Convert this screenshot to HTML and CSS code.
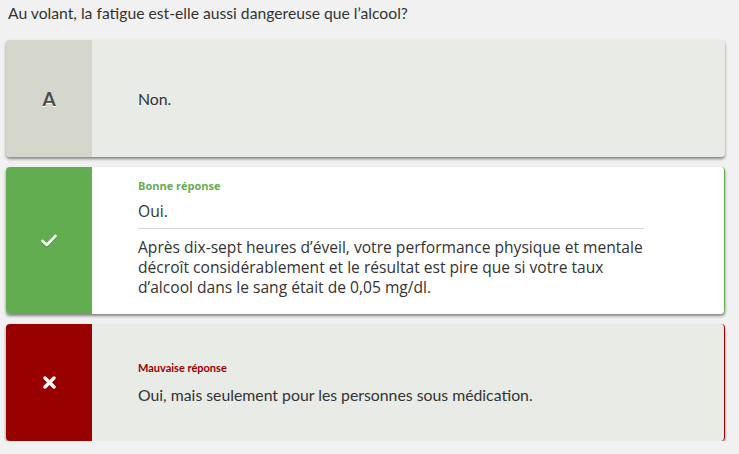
FILE: index.html
```html
<!DOCTYPE html>
<html lang="fr">
  <head>
    <meta charset="UTF-8" />
    <meta name="viewport" content="width=device-width, initial-scale=1.0" />
    <title>Quiz</title>
    <link rel="stylesheet" href="styles.css">
  </head>
  <body>
    <p class="question">Au volant, la fatigue est-elle aussi dangereuse que l’alcool?</p>

    <div class="answers">
      <div class="answer">
        <div class="marker">A</div>
        <div class="content">
          <p class="text">Non.</p>
        </div>
      </div>

      <div class="answer correct">
        <div class="marker">
          <svg width="16" height="13" viewBox="0 0 16 13">
            <path d="M1.5 7 L5.8 11 L14.5 2" fill="none" stroke="#fff" stroke-width="2.6" stroke-linecap="round" stroke-linejoin="round" />
          </svg>
        </div>
        <div class="content">
          <p class="label">Bonne réponse</p>
          <p class="text">Oui.</p>
          <p class="explain">Après dix-sept heures d’éveil, votre performance physique et mentale décroît considérablement et le résultat est pire que si votre taux d’alcool dans le sang était de 0,05 mg/dl.</p>
        </div>
      </div>

      <div class="answer wrong">
        <div class="marker">
          <svg width="13" height="13" viewBox="0 0 13 13">
            <path d="M2 2 L11 11 M11 2 L2 11" fill="none" stroke="#fff" stroke-width="3.4" stroke-linecap="round" />
          </svg>
        </div>
        <div class="content">
          <p class="label">Mauvaise réponse</p>
          <p class="text">Oui, mais seulement pour les personnes sous médication.</p>
        </div>
      </div>
    </div>
  </body>
</html>
```

FILE: styles.css
```css
body {
  font-family: Lato, "Liberation Sans", sans-serif;
  background-color: #f1f1f1;
  color: #333;
  margin: 0;
  padding: 0;
}
.question {
  margin: 0;
  padding: 3px 8px 0;
  font-size: 15.7px;
  line-height: 20px;
}
.answers {
  display: flex;
  flex-direction: column;
  gap: 10px;
  padding: 17px 14px 0 6px;
}
.answer {
  display: flex;
  background: #e9ebe7;
  border-radius: 4px;
  box-shadow: 0 2px 3px rgba(0, 0, 0, 0.45);
  overflow: hidden;
}
.marker {
  flex: 0 0 86px;
  display: flex;
  align-items: center;
  justify-content: center;
  background: #d5d7cd;
  color: #4a4a4a;
  font-size: 19px;
  font-weight: bold;
  text-shadow: 0 1px 0 #fff;
}
.content {
  flex: 1;
  display: flex;
  flex-direction: column;
  justify-content: center;
  padding: 12px 46px;
  min-height: 93px;
}
.content p {
  margin: 0;
  max-width: 506px;
}
.text {
  font-size: 15.8px;
  line-height: 22px;
}
.label {
  font-size: 11px;
  font-weight: bold;
  line-height: 16px;
  margin-bottom: 8px !important;
}
.correct {
  background: #fff;
  border-right: 1px solid #63ad51;
}
.correct .marker {
  background: #63ad51;
}
.correct .label {
  color: #63ad51;
  margin-bottom: 6px !important;
}
.correct .content {
  font-family: "Open Sans", "DejaVu Sans", sans-serif;
  padding: 11px 46px 17px;
}
.correct .text {
  font-size: 15.6px;
  padding-bottom: 6px;
  border-bottom: 1px solid #d6d6d6;
}
.explain {
  font-size: 15.6px;
  line-height: 20px;
  padding-top: 8px;
}
.wrong {
  border-right: 1px solid #990000;
}
.wrong .marker {
  background: #990000;
}
.wrong .label {
  color: #990000;
}
.marker svg {
  filter: drop-shadow(0 1px 0 rgba(0, 0, 0, 0.25));
}
```
